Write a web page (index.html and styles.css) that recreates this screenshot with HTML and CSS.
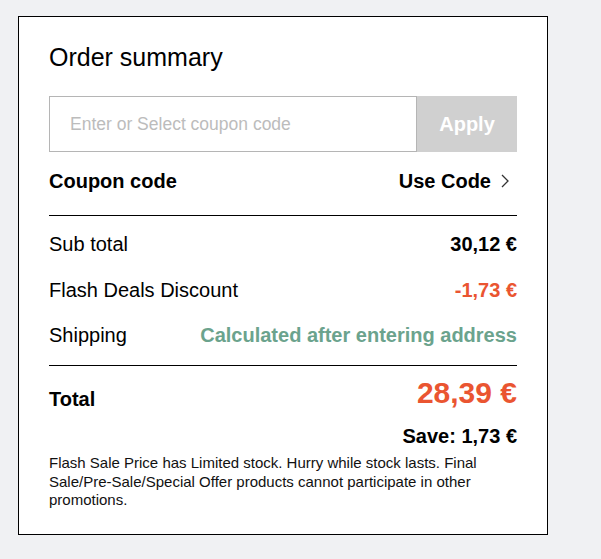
FILE: index.html
```
<!DOCTYPE html>
<html lang="en">
<head>
<meta charset="utf-8">
<title>Order summary</title>
<link rel="stylesheet" href="styles.css">
</head>
<body>
<div class="card">
  <h2 class="title">Order summary</h2>
  <div class="coupon-form">
    <input class="coupon-input" type="text" placeholder="Enter or Select coupon code">
    <button class="apply-btn" type="button">Apply</button>
  </div>
  <div class="coupon-row">
    <span class="bold">Coupon code</span>
    <span class="use-code"><span class="bold">Use Code</span>
      <svg class="chev" width="10" height="16" viewBox="0 0 10 16"><path d="M2 2 L8 8 L2 14" fill="none" stroke="#333" stroke-width="1.3"/></svg>
    </span>
  </div>
  <div class="lines">
    <div class="line"><span>Sub total</span><span class="bold">30,12 €</span></div>
    <div class="line"><span>Flash Deals Discount</span><span class="bold orange">-1,73 €</span></div>
    <div class="line"><span>Shipping</span><span class="bold green">Calculated after entering address</span></div>
  </div>
  <div class="total-row">
    <span class="bold total-label">Total</span>
    <span class="bold orange total-price">28,39 €</span>
  </div>
  <div class="save">Save: 1,73 €</div>
  <p class="note">Flash Sale Price has Limited stock. Hurry while stock lasts. Final Sale/Pre&#8209;Sale/Special Offer products cannot participate in other promotions.</p>
</div>
</body>
</html>
```
FILE: styles.css
```
* { box-sizing: border-box; }
html, body { margin: 0; padding: 0; }
body {
  background: #f0f1f3;
  font-family: "Liberation Sans", Arial, sans-serif;
  color: #000;
  padding: 16px 0 0 18px;
  height: 559px;
}
.card {
  width: 530px;
  height: 519px;
  background: #fff;
  border: 1px solid #000;
  padding: 25.5px 30px 0 30px;
}
.title {
  margin: 0;
  font-size: 25px;
  font-weight: normal;
  line-height: 29px;
}
.coupon-form {
  display: flex;
  margin-top: 24.5px;
  height: 56px;
}
.coupon-input {
  width: 368px;
  height: 56px;
  border: 1px solid #b5b5b5;
  padding: 0 0 0 20px;
  font-family: "Liberation Sans", Arial, sans-serif;
  font-size: 17.5px;
  outline: none;
  margin: 0;
}
.coupon-input::placeholder { color: #bcbcbc; }
.apply-btn {
  width: 100px;
  height: 56px;
  border: none;
  margin: 0;
  background: #d0d0d0;
  color: #fff;
  font-family: "Liberation Sans", Arial, sans-serif;
  font-weight: bold;
  font-size: 20px;
  padding: 0;
}
.bold { font-weight: bold; }
.orange { color: #ea5531; }
.green { color: #6ba38d; }
.coupon-row {
  display: flex;
  justify-content: space-between;
  align-items: center;
  font-size: 20px;
  line-height: 23px;
  margin-top: 17.5px;
  padding-bottom: 22.5px;
  border-bottom: 1px solid #000;
}
.use-code { display: flex; align-items: center; }
.chev { margin-left: 9px; margin-right: 7px; display: block; }
.lines {
  display: flex;
  flex-direction: column;
  gap: 22.5px;
  padding: 17px 0 18px;
  border-bottom: 1px solid #000;
}
.line {
  display: flex;
  justify-content: space-between;
  font-size: 20px;
  line-height: 23px;
}
.total-row {
  display: flex;
  justify-content: space-between;
  align-items: flex-end;
  padding-top: 10px;
}
.total-label { font-size: 20px; line-height: 23px; }
.total-price { font-size: 30px; line-height: 34.5px; }
.save {
  text-align: right;
  font-weight: bold;
  font-size: 20px;
  line-height: 23px;
  margin-top: 14.7px;
}
.note {
  margin: 6px 0 0;
  font-size: 15px;
  line-height: 18.5px;
  color: #111;
}
```
